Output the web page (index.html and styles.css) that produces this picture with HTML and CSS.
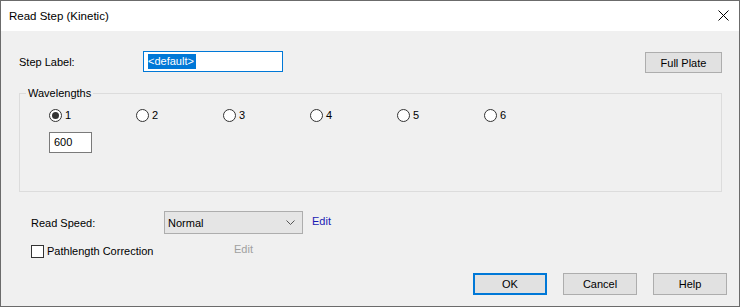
FILE: index.html
```html
<!DOCTYPE html>
<html lang="en">
<head>
  <meta charset="UTF-8" />
  <title>Read Step (Kinetic)</title>
  <link rel="stylesheet" href="styles.css">
</head>
<body>
  <div class="window">
    <!-- Title bar -->
    <div class="titlebar">
      <span class="title">Read Step (Kinetic)</span>
      <svg class="close" width="11" height="11" viewBox="0 0 11 11">
        <path d="M0.5 0.5 L10.5 10.5 M10.5 0.5 L0.5 10.5" stroke="#000" stroke-width="1" fill="none"/>
      </svg>
    </div>

    <div class="dialog">
      <div class="step-row">
        <label class="step-label">Step Label:</label>
        <div class="text-box focused"><span class="selected">&lt;default&gt;</span></div>
        <button class="btn full-plate">Full Plate</button>
      </div>

      <fieldset class="group">
        <legend>Wavelengths</legend>
        <div class="group-inner">
          <div class="radio-row">
            <div class="radio-item"><span class="radio checked"></span><span>1</span></div>
            <div class="radio-item"><span class="radio"></span><span>2</span></div>
            <div class="radio-item"><span class="radio"></span><span>3</span></div>
            <div class="radio-item"><span class="radio"></span><span>4</span></div>
            <div class="radio-item"><span class="radio"></span><span>5</span></div>
            <div class="radio-item"><span class="radio"></span><span>6</span></div>
          </div>
          <div class="text-box small">600</div>
        </div>
      </fieldset>

      <div class="speed-row">
        <span class="speed-label">Read Speed:</span>
        <div class="select">
          <span>Normal</span>
          <svg width="9" height="6" viewBox="0 0 9 6">
            <path d="M0.5 0.5 L4.5 4.5 L8.5 0.5" stroke="#555" stroke-width="1" fill="none"/>
          </svg>
        </div>
        <a class="link">Edit</a>
      </div>

      <div class="path-row">
        <span class="checkbox"></span>
        <span class="path-label">Pathlength Correction</span>
        <span class="link disabled">Edit</span>
      </div>

      <div class="buttons">
        <button class="btn default">OK</button>
        <button class="btn">Cancel</button>
        <button class="btn">Help</button>
      </div>
    </div>
  </div>
</body>
</html>
```

FILE: styles.css
```css
/* Reset */
* { margin: 0; padding: 0; box-sizing: border-box; }
body {
  font-family: "Liberation Sans", Arial, sans-serif;
  font-size: 11px;
  color: #000;
  background: #fff;
}
/* Window frame */
.window {
  width: 740px;
  height: 307px;
  border: 1px solid #6b6b6b;
  display: flex;
  flex-direction: column;
  overflow: hidden;
}
.titlebar {
  height: 30px;
  background: #fff;
  display: flex;
  align-items: center;
  justify-content: space-between;
  padding: 0 10px 0 8px;
  flex-shrink: 0;
}
.title { font-size: 11.5px; line-height: 16px; }
.close { margin-top: -1px; }
/* Dialog body */
.dialog {
  flex: 1;
  background: #f0f0f0;
  padding: 20px 17px 11px 18px;
  display: flex;
  flex-direction: column;
}
.step-row {
  display: flex;
  align-items: center;
  height: 21px;
}
.step-label { width: 124px; line-height: 16px; }
.text-box {
  height: 21px;
  border: 1px solid #7a7a7a;
  background: #fff;
  line-height: 19px;
  padding: 0 4px;
}
.text-box.focused { width: 140px; border-color: #0078d7; }
.selected { background: #0078d7; color: #fff; display: inline-block; line-height: 15px; padding-right: 2px; }
.text-box.small { width: 43px; margin-top: 9px; }
.btn {
  font-family: inherit;
  font-size: 11px;
  width: 74px;
  height: 22px;
  background: #e1e1e1;
  border: 1px solid #adadad;
  color: #000;
}
.btn.full-plate { width: 77px; height: 21px; margin-left: auto; margin-top: 2px; }
.btn.default { border: 2px solid #0078d7; }
/* Wavelengths group */
.group {
  margin-top: 13px;
  border: 1px solid #dcdcdc;
  padding: 6px 0 38px 6px;
}
.group legend { padding: 0 2px; line-height: 16px; }
.group-inner { margin-left: 23px; }
.radio-row { display: flex; height: 16px; align-items: center; }
.radio-item { width: 87px; display: flex; align-items: center; gap: 3px; }
.radio {
  width: 13px;
  height: 13px;
  border: 1px solid #333;
  border-radius: 50%;
  background: #fff;
  display: flex;
  align-items: center;
  justify-content: center;
}
.radio.checked::after {
  content: "";
  width: 7px;
  height: 7px;
  border-radius: 50%;
  background: #333;
}
/* Bottom rows */
.speed-row {
  margin-top: 19px;
  padding-left: 12px;
  display: flex;
  align-items: center;
  height: 23px;
}
.speed-label { width: 133px; }
.select {
  width: 139px;
  height: 23px;
  background: #e5e5e5;
  border: 1px solid #adadad;
  display: flex;
  align-items: center;
  justify-content: space-between;
  padding: 0 7px 0 3px;
}
.link { color: #1a1ab4; margin-left: 9px; margin-top: -4px; }
.path-row {
  margin-top: 9px;
  padding-left: 12px;
  display: flex;
  align-items: center;
  height: 16px;
}
.checkbox {
  width: 13px;
  height: 13px;
  border: 1px solid #333;
  background: #fff;
  margin-right: 3px;
}
.path-label { width: 187px; }
.link.disabled { color: #a0a0a0; margin: -4px 0 0 0; }
.buttons {
  margin-top: auto;
  margin-right: -5px;
  display: flex;
  justify-content: flex-end;
  gap: 16px;
}
```
